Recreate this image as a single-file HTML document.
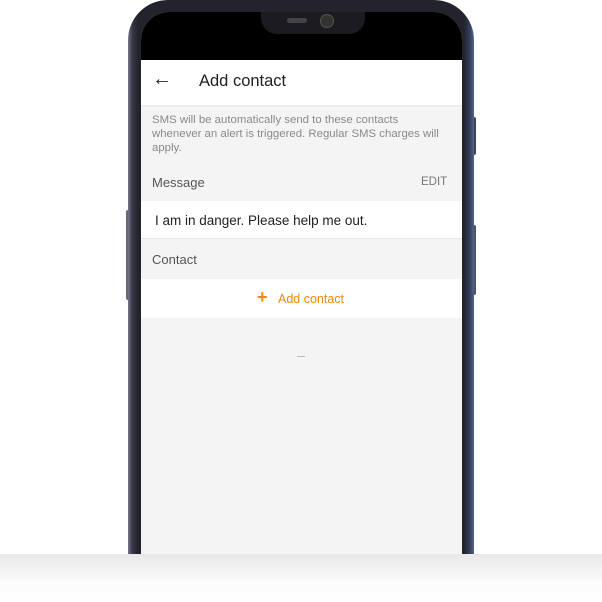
<!DOCTYPE html>
<html><head><style>
body{margin:0;width:602px;height:602px;background:#fff;position:relative;overflow:hidden;font-family:"Liberation Sans",sans-serif}
.frame{position:absolute;left:128px;top:0;width:346px;height:580px;border-radius:40px 40px 0 0;background:linear-gradient(90deg,#7a7490 0,#3a3a48 4px,#22232c 10px,#22232c 336px,#34405e 342px,#5a6586 346px)}
.screen{position:absolute;left:141px;top:12px;width:321px;height:570px;background:#f4f4f4;border-radius:28px 28px 0 0;overflow:hidden}
.black{position:absolute;left:0;top:0;width:321px;height:48px;background:#000}
.notch{position:absolute;left:120px;top:0;width:104px;height:22px;background:#1c1c20;border-radius:0 0 16px 16px}
.cam{position:absolute;left:179px;top:2px;width:12px;height:12px;border-radius:50%;background:#333;border:1px solid #555}
.spk{position:absolute;left:146px;top:6px;width:20px;height:5px;border-radius:3px;background:#444}
.bar{position:absolute;left:0;top:48px;width:321px;height:45px;background:#fff;box-shadow:0 1px 2px rgba(0,0,0,.06)}
.t{position:absolute;white-space:nowrap}
.btn{position:absolute;background:#3a4566;width:4px;border-radius:2px}
.fade{position:absolute;left:0;top:554px;width:602px;height:48px;background:linear-gradient(#e9e9e9,#fbfbfb 60%,#fff)}
</style></head><body>
<div class="btn" style="left:472px;top:117px;height:38px"></div>
<div class="btn" style="left:472px;top:225px;height:70px;background:#4a5470"></div>
<div class="btn" style="left:126px;top:210px;height:90px;background:#6a6678"></div>
<div class="frame"></div>
<div class="screen">
<div class="black"></div>
<div class="notch"></div><div class="spk"></div><div class="cam"></div>
<div class="bar">
<div class="t" style="left:11px;top:8px;font-size:20px;font-weight:bold;color:#222">&#8592;</div>
<div class="t" style="left:58px;top:12px;font-size:16.5px;color:#222">Add contact</div>
</div>
<div class="t" style="left:11px;top:101px;font-size:11.4px;line-height:14px;color:#8a8a8a">SMS will be automatically send to these contacts<br>whenever an alert is triggered. Regular SMS charges will<br>apply.</div>
<div class="t" style="left:11px;top:163px;font-size:13px;color:#555">Message</div>
<div class="t" style="left:280px;top:164px;font-size:11.5px;color:#777">EDIT</div>
<div style="position:absolute;left:0;top:189px;width:321px;height:37px;background:#fff;border-bottom:1px solid #e6e6e6"></div>
<div class="t" style="left:14px;top:201px;font-size:13.5px;color:#222">I am in danger. Please help me out.</div>
<div class="t" style="left:11px;top:240px;font-size:13px;color:#555">Contact</div>
<div style="position:absolute;left:0;top:267px;width:321px;height:39px;background:#fff"></div>
<div class="t" style="left:116px;top:275px;font-size:18px;font-weight:bold;color:#f08a00">+</div>
<div class="t" style="left:137px;top:280px;font-size:12.5px;color:#f08a00">Add contact</div>
<div style="position:absolute;left:156px;top:344px;width:8px;height:1px;background:#bbb"></div>
</div>
<div class="fade"></div>
</body></html>
